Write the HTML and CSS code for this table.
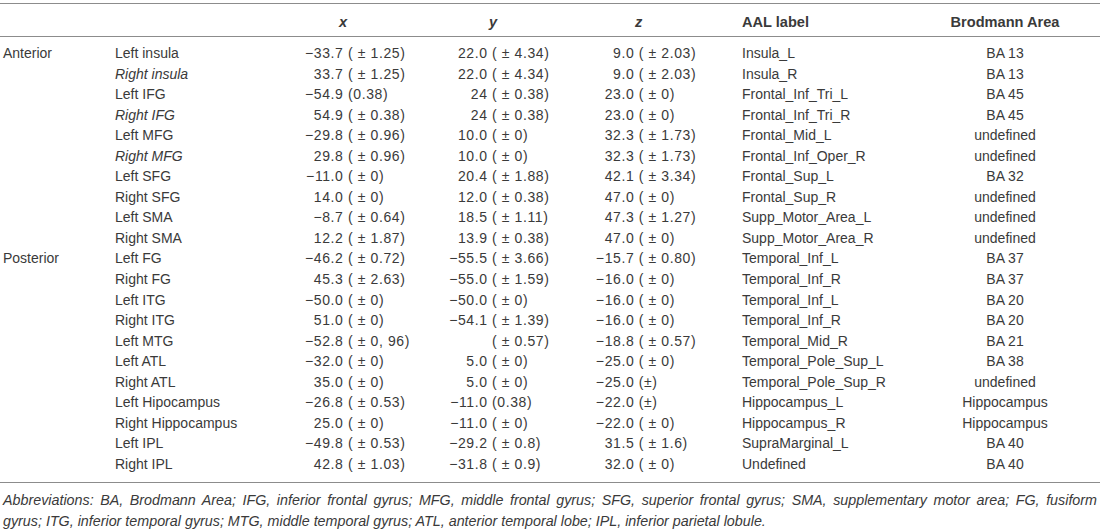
FILE: index.html
```html
<!DOCTYPE html>
<html>
    <head>
        <meta http-equiv="Content-Type" content="text/html; charset=utf-8" />
        <title>Peak coordinates</title>
        <link rel="stylesheet" href="styles.css">
    </head>
    <body>
        <table class="coords">
            <colgroup>
                <col class="c_region">
                <col class="c_label">
                <col class="c_x">
                <col class="c_y">
                <col class="c_z">
                <col class="c_aal">
                <col class="c_ba">
            </colgroup>
            <thead>
                <tr>
                    <th></th>
                    <th></th>
                    <th class="h_x"><i>x</i></th>
                    <th class="h_y"><i>y</i></th>
                    <th class="h_z"><i>z</i></th>
                    <th class="h_aal">AAL label</th>
                    <th class="h_ba">Brodmann Area</th>
                </tr>
            </thead>
            <tbody>
                <tr class="first">
                    <td>Anterior</td><td>Left insula</td>
                    <td class="v"><span class="n">−33.7</span> ( ± 1.25)</td>
                    <td class="v"><span class="n">22.0</span> ( ± 4.34)</td>
                    <td class="v"><span class="n">9.0</span> ( ± 2.03)</td>
                    <td class="aal">Insula_L</td><td class="ba">BA 13</td>
                </tr>
                <tr>
                    <td></td><td><i>Right insula</i></td>
                    <td class="v"><span class="n">33.7</span> ( ± 1.25)</td>
                    <td class="v"><span class="n">22.0</span> ( ± 4.34)</td>
                    <td class="v"><span class="n">9.0</span> ( ± 2.03)</td>
                    <td class="aal">Insula_R</td><td class="ba">BA 13</td>
                </tr>
                <tr>
                    <td></td><td>Left IFG</td>
                    <td class="v"><span class="n">−54.9</span> (0.38)</td>
                    <td class="v"><span class="n">24</span> ( ± 0.38)</td>
                    <td class="v"><span class="n">23.0</span> ( ± 0)</td>
                    <td class="aal">Frontal_Inf_Tri_L</td><td class="ba">BA 45</td>
                </tr>
                <tr>
                    <td></td><td><i>Right IFG</i></td>
                    <td class="v"><span class="n">54.9</span> ( ± 0.38)</td>
                    <td class="v"><span class="n">24</span> ( ± 0.38)</td>
                    <td class="v"><span class="n">23.0</span> ( ± 0)</td>
                    <td class="aal">Frontal_Inf_Tri_R</td><td class="ba">BA 45</td>
                </tr>
                <tr>
                    <td></td><td>Left MFG</td>
                    <td class="v"><span class="n">−29.8</span> ( ± 0.96)</td>
                    <td class="v"><span class="n">10.0</span> ( ± 0)</td>
                    <td class="v"><span class="n">32.3</span> ( ± 1.73)</td>
                    <td class="aal">Frontal_Mid_L</td><td class="ba">undefined</td>
                </tr>
                <tr>
                    <td></td><td><i>Right MFG</i></td>
                    <td class="v"><span class="n">29.8</span> ( ± 0.96)</td>
                    <td class="v"><span class="n">10.0</span> ( ± 0)</td>
                    <td class="v"><span class="n">32.3</span> ( ± 1.73)</td>
                    <td class="aal">Frontal_Inf_Oper_R</td><td class="ba">undefined</td>
                </tr>
                <tr>
                    <td></td><td>Left SFG</td>
                    <td class="v"><span class="n">−11.0</span> ( ± 0)</td>
                    <td class="v"><span class="n">20.4</span> ( ± 1.88)</td>
                    <td class="v"><span class="n">42.1</span> ( ± 3.34)</td>
                    <td class="aal">Frontal_Sup_L</td><td class="ba">BA 32</td>
                </tr>
                <tr>
                    <td></td><td>Right SFG</td>
                    <td class="v"><span class="n">14.0</span> ( ± 0)</td>
                    <td class="v"><span class="n">12.0</span> ( ± 0.38)</td>
                    <td class="v"><span class="n">47.0</span> ( ± 0)</td>
                    <td class="aal">Frontal_Sup_R</td><td class="ba">undefined</td>
                </tr>
                <tr>
                    <td></td><td>Left SMA</td>
                    <td class="v"><span class="n">−8.7</span> ( ± 0.64)</td>
                    <td class="v"><span class="n">18.5</span> ( ± 1.11)</td>
                    <td class="v"><span class="n">47.3</span> ( ± 1.27)</td>
                    <td class="aal">Supp_Motor_Area_L</td><td class="ba">undefined</td>
                </tr>
                <tr>
                    <td></td><td>Right SMA</td>
                    <td class="v"><span class="n">12.2</span> ( ± 1.87)</td>
                    <td class="v"><span class="n">13.9</span> ( ± 0.38)</td>
                    <td class="v"><span class="n">47.0</span> ( ± 0)</td>
                    <td class="aal">Supp_Motor_Area_R</td><td class="ba">undefined</td>
                </tr>
                <tr>
                    <td>Posterior</td><td>Left FG</td>
                    <td class="v"><span class="n">−46.2</span> ( ± 0.72)</td>
                    <td class="v"><span class="n">−55.5</span> ( ± 3.66)</td>
                    <td class="v"><span class="n">−15.7</span> ( ± 0.80)</td>
                    <td class="aal">Temporal_Inf_L</td><td class="ba">BA 37</td>
                </tr>
                <tr>
                    <td></td><td>Right FG</td>
                    <td class="v"><span class="n">45.3</span> ( ± 2.63)</td>
                    <td class="v"><span class="n">−55.0</span> ( ± 1.59)</td>
                    <td class="v"><span class="n">−16.0</span> ( ± 0)</td>
                    <td class="aal">Temporal_Inf_R</td><td class="ba">BA 37</td>
                </tr>
                <tr>
                    <td></td><td>Left ITG</td>
                    <td class="v"><span class="n">−50.0</span> ( ± 0)</td>
                    <td class="v"><span class="n">−50.0</span> ( ± 0)</td>
                    <td class="v"><span class="n">−16.0</span> ( ± 0)</td>
                    <td class="aal">Temporal_Inf_L</td><td class="ba">BA 20</td>
                </tr>
                <tr>
                    <td></td><td>Right ITG</td>
                    <td class="v"><span class="n">51.0</span> ( ± 0)</td>
                    <td class="v"><span class="n">−54.1</span> ( ± 1.39)</td>
                    <td class="v"><span class="n">−16.0</span> ( ± 0)</td>
                    <td class="aal">Temporal_Inf_R</td><td class="ba">BA 20</td>
                </tr>
                <tr>
                    <td></td><td>Left MTG</td>
                    <td class="v"><span class="n">−52.8</span> ( ± 0, 96)</td>
                    <td class="v"><span class="n"></span> ( ± 0.57)</td>
                    <td class="v"><span class="n">−18.8</span> ( ± 0.57)</td>
                    <td class="aal">Temporal_Mid_R</td><td class="ba">BA 21</td>
                </tr>
                <tr>
                    <td></td><td>Left ATL</td>
                    <td class="v"><span class="n">−32.0</span> ( ± 0)</td>
                    <td class="v"><span class="n">5.0</span> ( ± 0)</td>
                    <td class="v"><span class="n">−25.0</span> ( ± 0)</td>
                    <td class="aal">Temporal_Pole_Sup_L</td><td class="ba">BA 38</td>
                </tr>
                <tr>
                    <td></td><td>Right ATL</td>
                    <td class="v"><span class="n">35.0</span> ( ± 0)</td>
                    <td class="v"><span class="n">5.0</span> ( ± 0)</td>
                    <td class="v"><span class="n">−25.0</span> (±)</td>
                    <td class="aal">Temporal_Pole_Sup_R</td><td class="ba">undefined</td>
                </tr>
                <tr>
                    <td></td><td>Left Hipocampus</td>
                    <td class="v"><span class="n">−26.8</span> ( ± 0.53)</td>
                    <td class="v"><span class="n">−11.0</span> (0.38)</td>
                    <td class="v"><span class="n">−22.0</span> (±)</td>
                    <td class="aal">Hippocampus_L</td><td class="ba">Hippocampus</td>
                </tr>
                <tr>
                    <td></td><td>Right Hippocampus</td>
                    <td class="v"><span class="n">25.0</span> ( ± 0)</td>
                    <td class="v"><span class="n">−11.0</span> ( ± 0)</td>
                    <td class="v"><span class="n">−22.0</span> ( ± 0)</td>
                    <td class="aal">Hippocampus_R</td><td class="ba">Hippocampus</td>
                </tr>
                <tr>
                    <td></td><td>Left IPL</td>
                    <td class="v"><span class="n">−49.8</span> ( ± 0.53)</td>
                    <td class="v"><span class="n">−29.2</span> ( ± 0.8)</td>
                    <td class="v"><span class="n">31.5</span> ( ± 1.6)</td>
                    <td class="aal">SupraMarginal_L</td><td class="ba">BA 40</td>
                </tr>
                <tr class="last">
                    <td></td><td>Right IPL</td>
                    <td class="v"><span class="n">42.8</span> ( ± 1.03)</td>
                    <td class="v"><span class="n">−31.8</span> ( ± 0.9)</td>
                    <td class="v"><span class="n">32.0</span> ( ± 0)</td>
                    <td class="aal">Undefined</td><td class="ba">BA 40</td>
                </tr>
            </tbody>
        </table>
        <p class="note"><span class="line">Abbreviations: BA, Brodmann Area; IFG, inferior frontal gyrus; MFG, middle frontal gyrus; SFG, superior frontal gyrus; SMA, supplementary motor area; FG, fusiform</span> gyrus; ITG, inferior temporal gyrus; MTG, middle temporal gyrus; ATL, anterior temporal lobe; IPL, inferior parietal lobule.</p>
    </body>
</html>
```

FILE: styles.css
```css
body {
    margin: 0;
    background: #fff;
    color: #3a3a3a;
    font-family: "Liberation Sans", Arial, sans-serif;
    font-size: 14px;
}
.coords {
    margin-top: 3px;
    width: 1100px;
    table-layout: fixed;
    border-collapse: collapse;
    border-top: 1px solid #8c8c8c;
    border-bottom: 1px solid #8c8c8c;
}
.c_region { width: 112px; }
.c_label { width: 178px; }
.c_x { width: 150px; }
.c_y { width: 150px; }
.c_z { width: 145px; }
.c_aal { width: 175px; }
.c_ba { width: 190px; }

.coords th {
    padding: 4px 0 0 0;
    line-height: 28px;
    text-align: left;
    font-size: 14.6px;
    font-weight: bold;
    border-bottom: 1px solid #8c8c8c;
}
.coords th.h_x, .coords th.h_y { padding-left: 49px; }
.coords th.h_z { padding-left: 45px; }
.coords th.h_aal { padding-left: 7px; }
.coords th.h_ba { text-align: center; }

.coords td {
    padding: 0 0 0 3px;
    line-height: 20.55px;
    white-space: nowrap;
}
.coords tr.first td { padding-top: 6px; }
.coords tr.last td { padding-bottom: 8px; }
.coords td.v { letter-spacing: 0.6px; }
.coords td.aal { padding-left: 7px; }
.coords td.ba { text-align: center; padding-left: 0; }

.n {
    display: inline-block;
    text-align: right;
}
.coords td:nth-child(3) .n { width: 50.5px; }
.coords td:nth-child(4) .n { width: 44.6px; }
.coords td:nth-child(5) .n { width: 41.3px; }

.note {
    margin: 0;
    padding: 7px 3px 0 3px;
    font-size: 14.3px;
    font-style: italic;
    line-height: 21px;
    text-align: justify;
}
.note .line {
    display: block;
    text-align-last: justify;
}
```
